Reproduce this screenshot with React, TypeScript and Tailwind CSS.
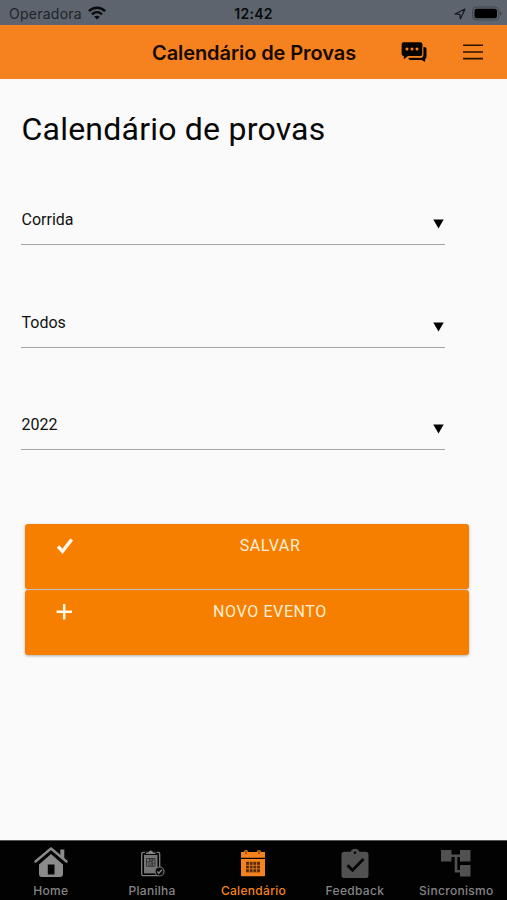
import React from "react";

function WifiIcon() {
  return (
    <svg className="-mt-px ml-[6px] h-[14px] w-[18px] shrink-0" viewBox="0 0 18 14" fill="none" stroke="#080a0c" strokeWidth="2.5">
      <path d="M.9 5.1C5.4.5 12.6.5 17.1 5.1" />
      <path d="M4 8.3c2.900-2.800 7.100-2.800 10 0" />
      <path d="M9 13.400 6.200 10.700c1.600-1.400 4-1.400 5.600 0z" fill="#080a0c" stroke="none" />
    </svg>
  );
}

function StatusBar() {
  return (
    <div className="grid h-[25px] grid-cols-[1fr_auto_1fr] items-center bg-[#5d646d] text-[#080a0c]">
      <div className="flex items-center pt-[2px] pl-[9px]">
        <span className="w-[73px] whitespace-nowrap text-[14px] leading-5 tracking-[0.25px] text-[#20252a]">Operadora</span>
        <WifiIcon />
      </div>
      <span className="pt-[2px] text-[14px] leading-5 font-semibold tracking-[0.3px]">12:42</span>
      <div className="flex items-center justify-end pt-[2px] pr-[5px]">
        <svg className="mr-[6px] h-3 w-3" viewBox="0 0 12 12" fill="none" stroke="#15191d" strokeWidth="1.2" strokeLinejoin="round">
          <path d="M11 1 1 6l4.800.4L6.300 11z" />
        </svg>
        <svg className="h-[15px] w-[30px]" viewBox="0 0 30 15">
          <rect x=".7" y="1" width="26" height="13" rx="4" fill="#5d646d" stroke="#42484f" strokeWidth="1.2" />
          <rect x="2.5" y="2.8" width="22.5" height="9.4" rx="2.3" fill="#000" />
          <path d="M28 5.200c2 .8 2 3.800 0 4.600z" fill="#42484f" />
        </svg>
      </div>
    </div>
  );
}

function Header() {
  return (
    <header className="flex h-[54px] items-center bg-[#f5821f] pl-[152px] text-[#160900]">
      <h2 className="w-[205px] pt-px whitespace-nowrap text-[20px] leading-6 font-semibold tracking-[-0.08px]">Calendário de Provas</h2>
      <svg className="ml-[44px] h-[21px] w-[26px]" viewBox="0 0 26 21">
        <path d="M22 5h1.500a2 2 0 0 1 2 2v8a2 2 0 0 1-1.400 1.900V20L20.700 18H9.500a2 2 0 0 1-2-2.200H20a2 2 0 0 0 2-2z" fill="#080400" />
        <path d="M2.700.3h16.600A2.200 2.200 0 0 1 21.500 2.500v9.300a2.200 2.200 0 0 1-2.200 2.200H7L2.800 17.200V14a2.200 2.200 0 0 1-2.200-2.200V2.500A2.200 2.200 0 0 1 2.700.3z" fill="#080400" />
        <path d="M21.900 5v8.300a1.500 1.500 0 0 1-1.500 1.500H7.500" fill="none" stroke="#f5821f" strokeWidth="1" />
        <g fill="#f5821f"><circle cx="6" cy="7" r="1.5" /><circle cx="11" cy="7" r="1.5" /><circle cx="16" cy="7" r="1.500" /></g>
      </svg>
      <svg className="ml-[36px] h-[16px] w-[20px]" viewBox="0 0 20 16" stroke="#2b1300" strokeWidth="1.6">
        <path d="M0 1.200h20M0 8h20M0 14.600h20" />
      </svg>
    </header>
  );
}

function SelectField({ value }: { value: string }) {
  return (
    <div className="flex h-[39px] w-[424px] items-start justify-between border-b-[1.5px] border-[#a5a5a5] text-[#111]">
      <span className="pt-[4px] pl-[0.5px] text-[16px] leading-5">{value}</span>
      <svg className="mt-[13px] mr-px h-[10px] w-[11px]" viewBox="0 0 11 10"><path d="M.3.500h10.400L5.500 9.500z" fill="#000" /></svg>
    </div>
  );
}

function ActionButton({ label, icon }: { label: string; icon: React.ReactNode }) {
  return (
    <button className="flex h-[65px] w-[444px] items-start rounded-[3px] bg-[#f77f00] pt-[12px] shadow-[0_1px_3px_rgba(0,0,0,0.3)]">
      <span className="ml-[31px] flex h-5 w-[18px] items-center">{icon}</span>
      <span className="mr-[3px] flex-1 text-center text-[16px] leading-5 tracking-[0.6px] text-[#fff0d9]">{label}</span>
    </button>
  );
}

function HomeIcon() {
  return (
    <svg className="h-[32px] w-[34px]" viewBox="0 0 34 32">
      <path d="M5 17.500 17 7l12 10.500V27a3 3 0 0 1-3 3H8a3 3 0 0 1-3-3z" fill="#8b8b8b" />
      <path d="m1.500 14.500L17 1.500l15.500 13" fill="none" stroke="#8b8b8b" strokeWidth="2.400" strokeLinecap="round" strokeLinejoin="round" />
      <path d="M26.300 2.500h4v9.200l-4-3.400z" fill="#8b8b8b" />
      <path d="M13.800 17.500h6.700v10h-6.700z" fill="#050505" />
    </svg>
  );
}

function PlanIcon() {
  return (
    <svg className="h-[32px] w-[34px]" viewBox="0 0 34 32">
      <rect x="6.700" y="5.300" width="18" height="23.400" rx="1.500" fill="none" stroke="#818181" strokeWidth="1.300" />
      <rect x="9" y="7.700" width="13.500" height="18.700" fill="#757575" />
      <path d="M10.500 7.500V5h2.300a3.100 3.100 0 0 1 5.800 0h2.400v2.500z" fill="#858585" stroke="#080808" strokeWidth="1.200" />
      <g fill="none" stroke="#353535"><path d="M11.500 11.500h8.500v7.700h-8.500zM14.500 11v3.500h3V11M11.500 15h2.500v4M16 19v-3h4M14 13h5M17.500 16v3" /></g>
      <circle cx="24.500" cy="24.500" r="4.500" fill="#080808" stroke="#777" strokeWidth="1.200" />
      <path d="m22.300 24.500 1.500 1.600 3.100-3.400" fill="none" stroke="#858585" strokeWidth="1.400" />
    </svg>
  );
}

function CalendarIcon() {
  return (
    <svg className="h-[32px] w-[34px]" viewBox="0 0 34 32">
      <path d="M5 5h3A2 2 0 0 1 12 5h9a2 2 0 0 1 4 0h4v5.800H5zM5 12h24v16.200a1 1 0 0 1-1 1H6a1 1 0 0 1-1-1z" fill="#f5821f" />
      <path d="M10 3.700v3.500M23 3.700v3.500" stroke="#5b2b06" strokeWidth="1" />
      <path d="M10 14.800h14v10.500H10z" fill="#5a2c09" />
      <path d="M10 18.300h14M10 21.800h14M13.400 14.800v10.500M17 14.800v10.500M20.600 14.800v10.500" stroke="#f5821f" strokeWidth=".8" />
    </svg>
  );
}

function FeedbackIcon() {
  return (
    <svg className="h-[32px] w-[34px]" viewBox="0 0 34 32">
      <path d="M6.500 4.800h6.200a4.500 4.500 0 0 1 8.600 0h6.200a3 3 0 0 1 3 3v20.400a2.800 2.800 0 0 1-3 2.800h-21a2.800 2.800 0 0 1-3-2.800V7.800a3 3 0 0 1 3-3z" fill="#515151" />
      <circle cx="17" cy="5.700" r="1.300" fill="#050505" />
      <path d="m9.500 18.200 5 5L25.500 12" fill="none" stroke="#050505" strokeWidth="2.800" />
    </svg>
  );
}

function SyncIcon() {
  return (
    <svg className="h-[32px] w-[34px]" viewBox="0 0 34 32">
      <path d="M2 3h10.500v11.500H2zM21 3h10.500v11.500H21zM21 18h10.500v11.500H21z" fill="#515151" />
      <path d="M12 8.700h9M17 8.700v15.600h4.500" fill="none" stroke="#515151" strokeWidth="2.600" />
    </svg>
  );
}

const tabs = [
  { label: "Home", Icon: HomeIcon, active: false },
  { label: "Planilha", Icon: PlanIcon, active: false },
  { label: "Calendário", Icon: CalendarIcon, active: true },
  { label: "Feedback", Icon: FeedbackIcon, active: false },
  { label: "Sincronismo", Icon: SyncIcon, active: false },
];

export default function App() {
  return (
    <div className="flex h-[900px] w-[507px] flex-col overflow-hidden bg-[#fafafa] font-[Inter,sans-serif]">
      <StatusBar />
      <Header />
      <main className="flex flex-1 flex-col pl-[21px] font-[Roboto,sans-serif]">
        <h1 className="mt-[30px] h-10 pl-[0.5px] text-[32px] leading-10 tracking-[0.22px] text-[#080808]">Calendário de provas</h1>
        <div className="mt-[57px] flex flex-col gap-[63.7px]">
          <SelectField value="Corrida" />
          <SelectField value="Todos" />
          <SelectField value="2022" />
        </div>
        <div className="mt-[73.6px] ml-1 flex flex-col gap-px">
          <ActionButton label="SALVAR" icon={<svg className="h-[18px] w-[18px]" viewBox="0 0 18 18"><path d="m2 9.300 4.500 5L15.700 2.500" fill="none" stroke="#fff8ea" strokeWidth="3.500" /></svg>} />
          <ActionButton label="NOVO EVENTO" icon={<svg className="h-[18px] w-[18px]" viewBox="0 0 18 18"><path d="M.5 8.800h15.500M8.200 1v15.500" fill="none" stroke="#fff8ea" strokeWidth="2.500" /></svg>} />
        </div>
      </main>
      <nav className="grid h-[60px] shrink-0 grid-cols-5 border-t border-[#555] bg-[#020202]">
        {tabs.map(({ label, Icon, active }) => (
          <div key={label} className={active ? "flex flex-col items-center pt-[6px] text-[#f5821f]" : "flex flex-col items-center pt-[6px] text-[#858585]"}>
            <Icon />
            <span className="mt-[4px] text-[12px] leading-4 font-medium tracking-[0.3px]">{label}</span>
          </div>
        ))}
      </nav>
    </div>
  );
}
